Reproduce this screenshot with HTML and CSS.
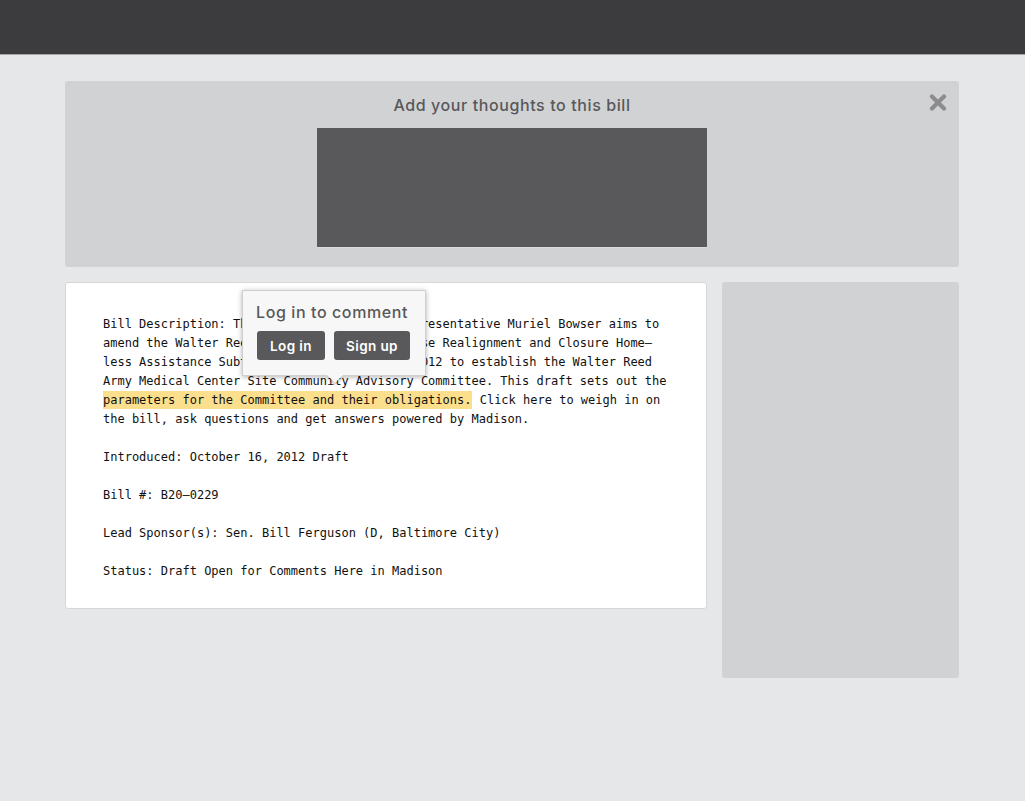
FILE: index.html
```html
<!DOCTYPE html>
<html lang="en">
<head>
<meta charset="utf-8">
<title>Madison</title>
<link rel="stylesheet" href="styles.css">
</head>
<body>
<header class="topbar"></header>
<main class="page">
  <section class="thoughts">
    <h2 class="thoughts-title">Add your thoughts to this bill</h2>
    <span class="close" aria-label="Close">
      <svg width="18" height="17" viewBox="0 0 18 17"><path d="M3 2.5 L15 14.5 M15 2.5 L3 14.5" stroke="#8c8c8e" stroke-width="4.2" stroke-linecap="round"/></svg>
    </span>
    <div class="thoughts-box"></div>
  </section>
  <div class="row">
    <article class="bill">
      <p class="bill-text">Bill Description: The bill introduced by Representative Muriel Bowser aims to<br>amend the Walter Reed Army Medical Center Base Realignment and Closure Home–<br>less Assistance Subtitle Amendments Act of 2012 to establish the Walter Reed<br>Army Medical Center Site Community Advisory Committee. This draft sets out the<br><mark class="hl">parameters for the Committee and their obligations.</mark> Click here to weigh in on<br>the bill, ask questions and get answers powered by Madison.</p>
      <p class="bill-text">Introduced: October 16, 2012 Draft</p>
      <p class="bill-text">Bill #: B20–0229</p>
      <p class="bill-text">Lead Sponsor(s): Sen. Bill Ferguson (D, Baltimore City)</p>
      <p class="bill-text">Status: Draft Open for Comments Here in Madison</p>
      <div class="popup">
        <div class="popup-title">Log in to comment</div>
        <div class="popup-actions">
          <button class="btn btn-login">Log in</button>
          <button class="btn btn-signup">Sign up</button>
        </div>
      </div>
    </article>
    <aside class="sidebar"></aside>
  </div>
</main>
</body>
</html>
```

FILE: styles.css
```css
* { box-sizing: border-box; }
body {
  margin: 0;
  background: #e6e7e9;
  font-family: "Inter", "Lato", "Liberation Sans", sans-serif;
}
.topbar {
  height: 55px;
  background: #3c3c3e;
  border-bottom: 1px solid #a6a6a8;
}
.page {
  width: 894px;
  margin: 26px auto 0 65px;
}
.thoughts {
  position: relative;
  height: 186px;
  background: #d1d2d4;
  border-radius: 3px;
  padding-top: 14px;
}
.thoughts-title {
  margin: 0;
  text-align: center;
  font-size: 16px;
  line-height: 20px;
  font-weight: 500;
  color: #58585a;
  letter-spacing: 0.6px;
}
.close {
  position: absolute;
  top: 13px;
  right: 12px;
  width: 18px;
  height: 17px;
}
.close svg { display: block; }
.thoughts-box {
  width: 390px;
  height: 120px;
  margin: 13px auto 0;
  background: #59595b;
  border-bottom: 1px solid #dcdcde;
}
.row {
  display: flex;
  gap: 15px;
  margin-top: 15px;
  align-items: flex-start;
}
.bill {
  position: relative;
  width: 642px;
  background: #fff;
  border: 1px solid #d6d7d9;
  border-radius: 3px;
  padding: 32px 37px 27px;
}
.bill-text {
  margin: 0 0 19px;
  font-family: "DejaVu Sans Mono", "Liberation Mono", monospace;
  font-size: 12px;
  line-height: 19px;
  color: #111;
  white-space: nowrap;
}
.bill-text:last-of-type { margin-bottom: 0; }
.hl {
  background: #fcdf8c;
  color: #111;
  padding: 2px 1px 2px 0;
}
.sidebar {
  width: 237px;
  height: 396px;
  background: #d1d2d4;
  border-radius: 3px;
}
.popup {
  position: absolute;
  left: 176px;
  top: 7px;
  width: 184px;
  height: 86px;
  background: #f7f7f7;
  border: 1px solid #cfcfcf;
  box-shadow: 0 1px 5px rgba(0,0,0,0.3);
  padding: 11px 10px 0 13px;
}
.popup::after {
  content: "";
  position: absolute;
  left: 84px;
  bottom: -8px;
  width: 0;
  height: 0;
  border-left: 8px solid transparent;
  border-right: 8px solid transparent;
  border-top: 8px solid #f7f7f7;
  filter: drop-shadow(0 2px 1px rgba(0,0,0,0.25));
}
.popup-title {
  font-size: 16px;
  line-height: 20px;
  font-weight: 500;
  color: #58585a;
  letter-spacing: 0.6px;
  white-space: nowrap;
}
.popup-actions {
  display: flex;
  gap: 9px;
  margin-top: 9px;
}
.btn {
  height: 29px;
  border: 0;
  border-radius: 3px;
  background: #59595b;
  color: #fff;
  font-family: "Inter", "Lato", "Liberation Sans", sans-serif;
  font-size: 13.5px;
  font-weight: 600;
  padding: 0;
  letter-spacing: 0.4px;
}
.btn-login { width: 68px; margin-left: 1px; }
.btn-signup { width: 76px; }
```
